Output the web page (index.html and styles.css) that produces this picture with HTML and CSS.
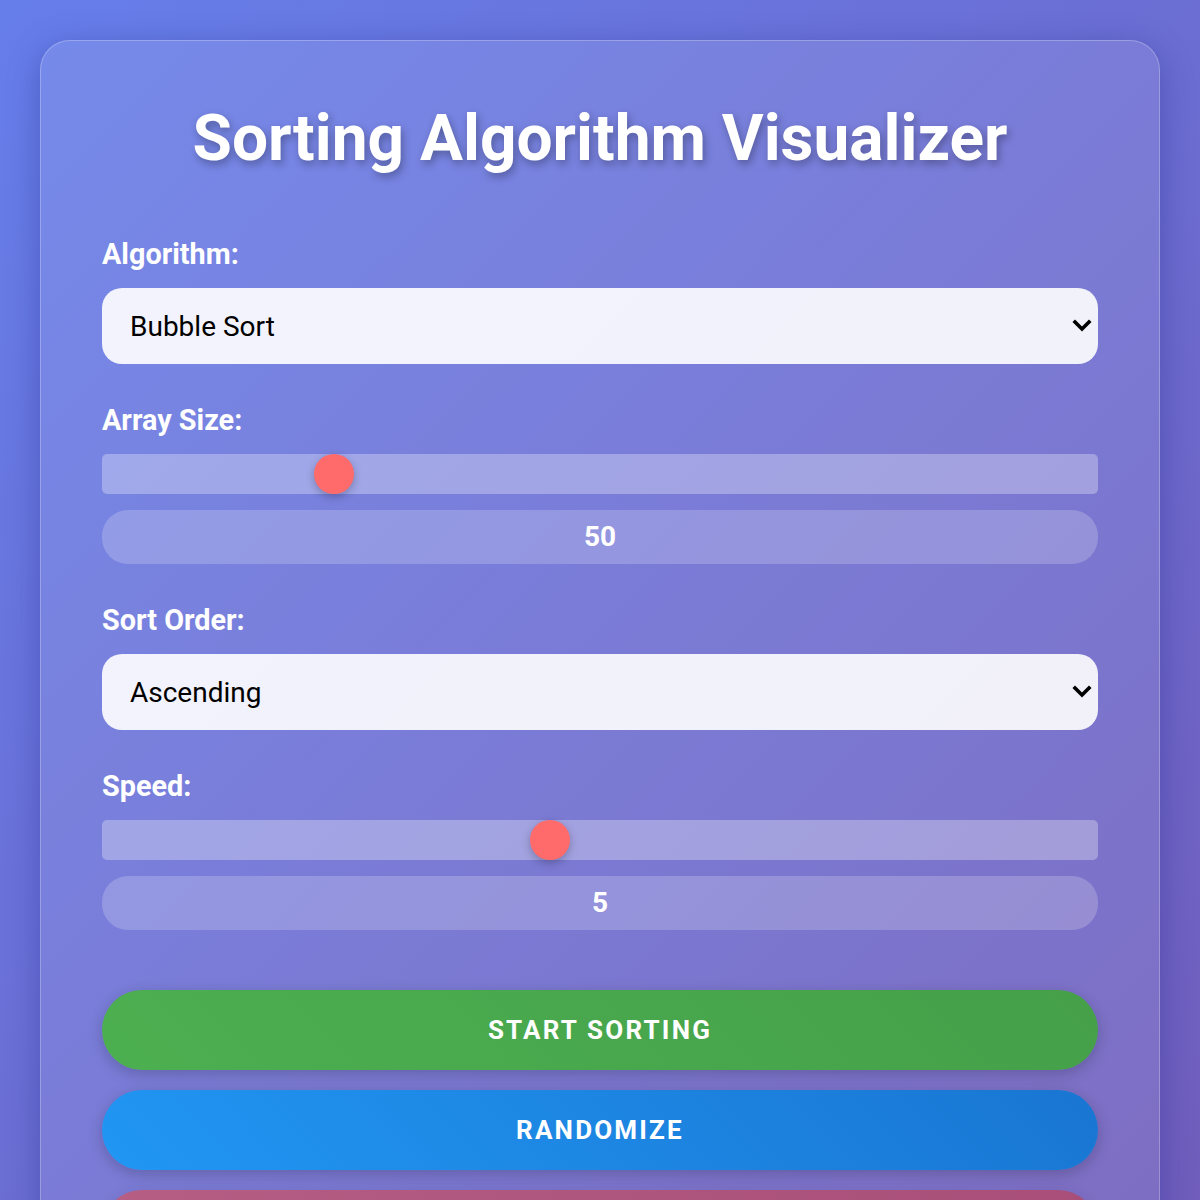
FILE: index.html
```html
<!DOCTYPE html>
<html lang="en">
<head>
<meta charset="utf-8">
<title>Sorting Algorithm Visualizer</title>
<link rel="stylesheet" href="styles.css">
</head>
<body>
<div class="card">
  <h1 class="title">Sorting Algorithm Visualizer</h1>

  <div class="group">
    <label class="label" for="algo">Algorithm:</label>
    <div class="select-wrap">
      <select id="algo" class="select">
        <option>Bubble Sort</option>
        <option>Selection Sort</option>
        <option>Insertion Sort</option>
        <option>Merge Sort</option>
        <option>Quick Sort</option>
      </select>
      <svg class="chevron" width="20" height="14" viewBox="0 0 20 14" aria-hidden="true"><polyline points="3,3 10,10 17,3" fill="none" stroke="#000" stroke-width="3.6" stroke-linecap="square" stroke-linejoin="miter"/></svg>
    </div>
  </div>

  <div class="group">
    <label class="label" for="size">Array Size:</label>
    <input id="size" class="range" type="range" min="10" max="190" value="50">
    <div class="value">50</div>
  </div>

  <div class="group">
    <label class="label" for="order">Sort Order:</label>
    <div class="select-wrap">
      <select id="order" class="select">
        <option>Ascending</option>
        <option>Descending</option>
      </select>
      <svg class="chevron" width="20" height="14" viewBox="0 0 20 14" aria-hidden="true"><polyline points="3,3 10,10 17,3" fill="none" stroke="#000" stroke-width="3.6" stroke-linecap="square" stroke-linejoin="miter"/></svg>
    </div>
  </div>

  <div class="group">
    <label class="label" for="speed">Speed:</label>
    <input id="speed" class="range" type="range" min="1" max="9.93" step="0.01" value="5">
    <div class="value">5</div>
  </div>

  <div class="buttons">
    <button class="btn btn-start">Start Sorting</button>
    <button class="btn btn-random">Randomize</button>
    <button class="btn btn-stop" disabled>Stop</button>
  </div>
</div>
</body>
</html>
```

FILE: styles.css
```css
* { box-sizing: border-box; }

html, body {
  margin: 0;
  padding: 0;
}

body {
  min-height: 2550px;
  padding: 40px;
  font-family: Roboto, "Liberation Sans", Arial, sans-serif;
  color: #fff;
  background: linear-gradient(135deg, #667eea 0%, #764ba2 100%);
}

.card {
  border: 1px solid rgba(255, 255, 255, 0.25);
  border-radius: 30px;
  padding: 60px 61px;
  background: rgba(255, 255, 255, 0.1);
  box-shadow: 0 8px 32px rgba(31, 38, 135, 0.37);
}

.title {
  margin: 0 0 62px;
  text-align: center;
  font-size: 64px;
  font-weight: 700;
  line-height: 75px;
  text-shadow: 2px 4px 8px rgba(0, 0, 0, 0.3);
}

.group {
  display: flex;
  flex-direction: column;
  margin-bottom: 40px;
}

.label {
  display: block;
  font-size: 28.8px;
  font-weight: 700;
  line-height: 33px;
  margin-bottom: 17px;
}

.select-wrap {
  position: relative;
}

.select {
  -webkit-appearance: none;
  appearance: none;
  display: block;
  width: 100%;
  height: 76px;
  padding: 0 50px 0 28px;
  border: none;
  border-radius: 20px;
  background: rgba(255, 255, 255, 0.9);
  color: #000;
  font-family: Roboto, "Liberation Sans", Arial, sans-serif;
  font-size: 28px;
  outline: none;
}

.chevron {
  position: absolute;
  right: 6px;
  top: 31px;
  pointer-events: none;
}

.range {
  -webkit-appearance: none;
  appearance: none;
  width: 100%;
  height: 40px;
  margin: 0;
  border-radius: 5px;
  background: rgba(255, 255, 255, 0.3);
  outline: none;
}

.range::-webkit-slider-thumb {
  -webkit-appearance: none;
  appearance: none;
  width: 40px;
  height: 40px;
  border-radius: 50%;
  background: #ff6b6b;
  box-shadow: 0 3px 8px rgba(0, 0, 0, 0.25);
  cursor: pointer;
}

.value {
  margin-top: 16px;
  height: 54px;
  border-radius: 26px;
  background: rgba(255, 255, 255, 0.2);
  text-align: center;
  font-size: 28px;
  font-weight: 700;
  line-height: 54px;
}

.buttons {
  display: flex;
  flex-direction: column;
  gap: 20px;
  margin-top: 60px;
}

.btn {
  height: 80px;
  border: none;
  border-radius: 40px;
  color: #fff;
  font-family: Roboto, "Liberation Sans", Arial, sans-serif;
  font-size: 26px;
  font-weight: 700;
  letter-spacing: 2.2px;
  text-transform: uppercase;
  box-shadow: 0 4px 15px rgba(0, 0, 0, 0.2);
  cursor: pointer;
}

.btn-start {
  background: linear-gradient(45deg, #4caf50, #45a049);
}

.btn-random {
  background: linear-gradient(45deg, #2196f3, #1976d2);
}

.btn-stop {
  background: linear-gradient(45deg, #f44336, #d32f2f);
  opacity: 0.5;
}
```
